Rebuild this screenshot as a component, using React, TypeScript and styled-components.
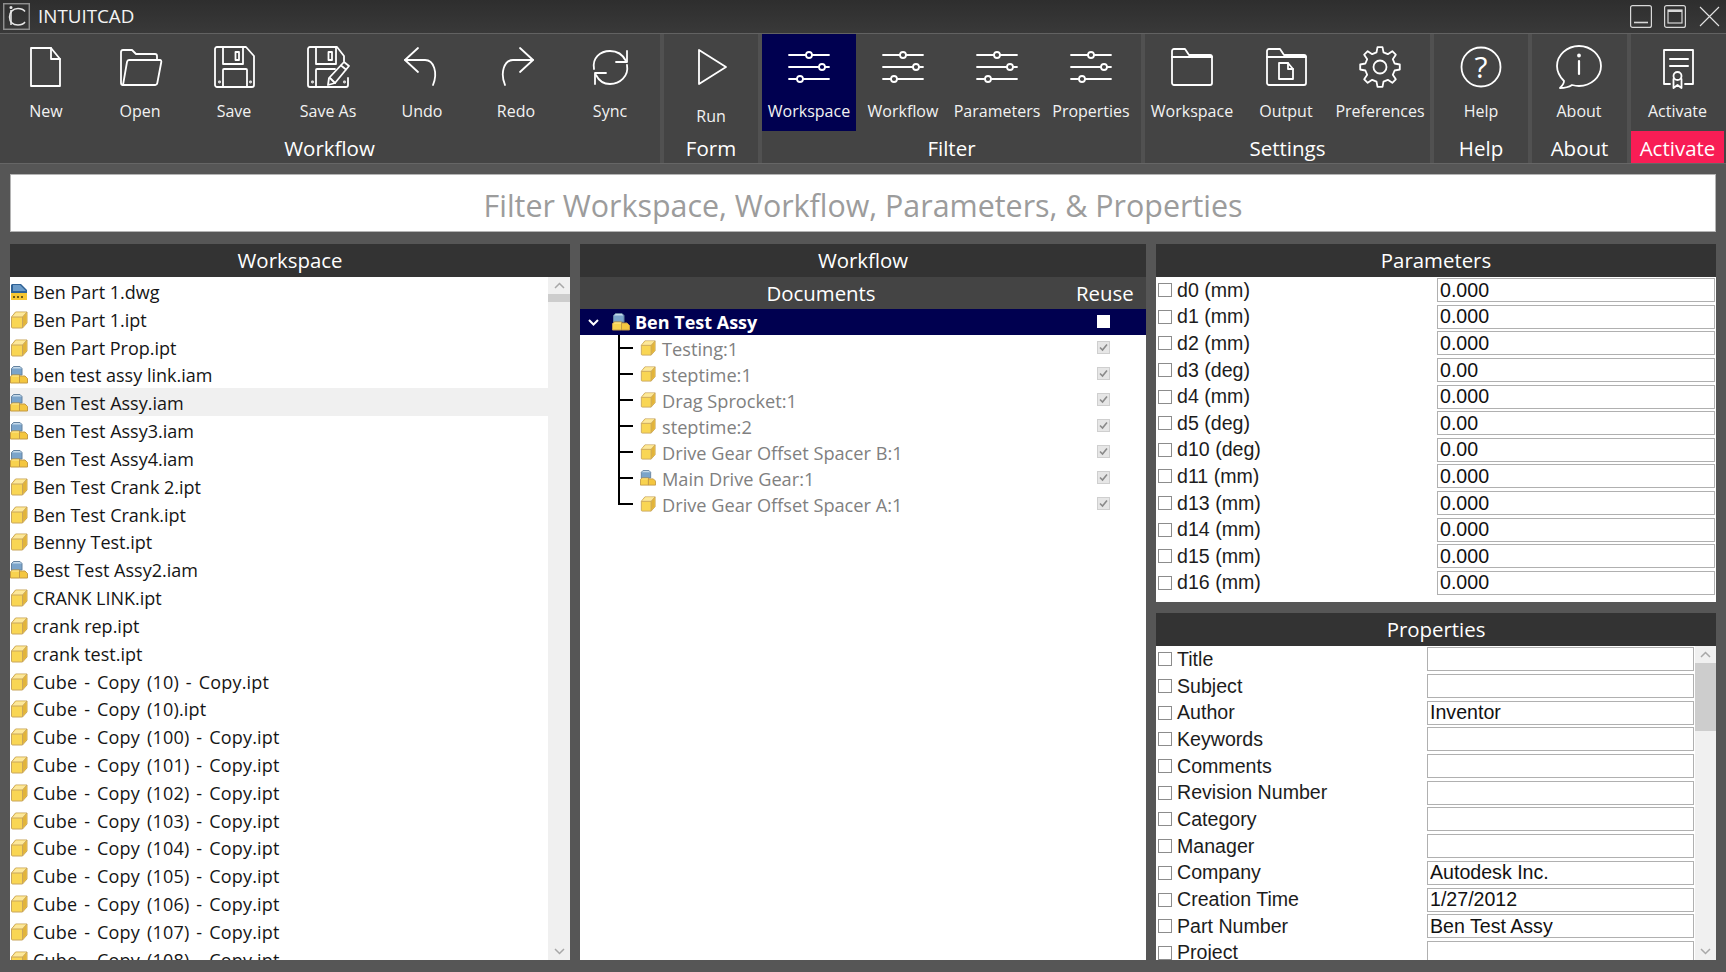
import React from 'react'
import styled, { createGlobalStyle } from 'styled-components'

const UI_FONT = '"Open Sans", "Noto Sans", sans-serif'
const FORM_FONT = '"Liberation Sans", Arial, sans-serif'

const GlobalStyle = createGlobalStyle`
  html, body {
    margin: 0;
    background: #565656;
    overflow: hidden;
  }
  * {
    box-sizing: border-box;
  }
`

const Page = styled.div`
  width: 1726px;
  height: 972px;
  display: flex;
  flex-direction: column;
  background: #565656;
  font-family: ${UI_FONT};
  overflow: hidden;
`

const TitleBar = styled.header`
  height: 34px;
  display: flex;
  align-items: center;
  padding: 0 5px 1px 3px;
  background: linear-gradient(#2e2e2e, #393939);
  border-bottom: 1px solid #626262;
  color: #f4f4f4;
`

const AppName = styled.span`
  margin-left: 8px;
  font-size: 18.8px;
  flex: 1;
`

const WindowButtons = styled.div`
  display: flex;
  gap: 12px;
  align-items: center;
`

const Ribbon = styled.nav`
  height: 130px;
  display: flex;
  margin-left: -1px;
  background: #444444;
  border-bottom: 1px solid #666666;
`

const Group = styled.section<{ $width: number }>`
  display: flex;
  flex-direction: column;
  flex: none;
  width: ${(p) => p.$width}px;
  & + & {
    margin-left: 4px;
  }
  box-shadow: 4px 0 0 #515151;
  &:last-child {
    box-shadow: none;
  }
`

const ButtonRow = styled.div`
  height: 97px;
  display: flex;
`

const GroupLabel = styled.div<{ $alert?: boolean }>`
  height: 32px;
  padding-top: 3px;
  line-height: 28px;
  text-align: center;
  color: #fff;
  font-size: 20.5px;
  background: ${(p) => (p.$alert ? '#f81d55' : 'transparent')};
`

const RibbonButton = styled.button<{ $active?: boolean; $low?: boolean }>`
  width: 94px;
  height: 97px;
  padding: 9px 0 0;
  border: 0;
  display: flex;
  flex-direction: column;
  align-items: center;
  color: #f2f2f2;
  font-family: inherit;
  font-size: 16px;
  background: ${(p) => (p.$active ? '#000050' : 'transparent')};
  span {
    display: block;
    line-height: 22px;
    margin-top: ${(p) => (p.$low ? '14px' : '9px')};
    white-space: nowrap;
  }
`

const FilterBox = styled.input`
  display: block;
  flex: none;
  height: 58px;
  margin: 10px 10px 12px;
  padding: 5px 0 0;
  border: 1px solid #b4b4b4;
  background: #fff;
  text-align: center;
  font-family: inherit;
  font-size: 30.4px;
  outline: none;
  &::placeholder {
    color: #9c9c9c;
    opacity: 1;
  }
`

const Main = styled.main`
  flex: 1;
  min-height: 0;
  display: grid;
  grid-template-columns: 560px 566px 560px;
  gap: 10px;
  padding: 0 10px 12px;
`

const Stack = styled.div`
  display: flex;
  flex-direction: column;
  gap: 11px;
  min-height: 0;
`

const Panel = styled.section<{ $height?: number }>`
  display: flex;
  flex-direction: column;
  min-height: 0;
  background: #fff;
  overflow: hidden;
  ${(p) => (p.$height ? `height: ${p.$height}px; flex: none;` : 'flex: 1;')}
`

const PanelHeader = styled.h2`
  margin: 0;
  flex: none;
  height: 33px;
  line-height: 33px;
  text-align: center;
  font-size: 20.4px;
  font-weight: 400;
  color: #fff;
  background: #333333;
`

const PanelBody = styled.div`
  flex: 1;
  min-height: 0;
  display: flex;
  justify-content: space-between;
  overflow: hidden;
`

const FileList = styled.ul`
  flex: 1;
  margin: 0;
  padding: 0;
  list-style: none;
  overflow: hidden;
`

const FileRow = styled.li<{ $hover?: boolean; $spaced?: boolean }>`
  height: 27.83px;
  display: flex;
  align-items: center;
  gap: 5px;
  padding-top: 2px;
  font-size: 18px;
  color: #151515;
  white-space: nowrap;
  background: ${(p) => (p.$hover ? '#f0f0f0' : 'transparent')};
  word-spacing: ${(p) => (p.$spaced ? '2px' : '0')};
  letter-spacing: ${(p) => (p.$spaced ? '.2px' : '0')};
`

const ScrollTrack = styled.div<{ $width: number }>`
  flex: none;
  width: ${(p) => p.$width}px;
  display: flex;
  flex-direction: column;
  background: #f0f0f0;
`

const ScrollArrow = styled.div`
  flex: none;
  height: 17px;
  display: flex;
  align-items: center;
  justify-content: center;
`

const ScrollThumb = styled.div<{ $size: number }>`
  flex: none;
  height: ${(p) => p.$size}px;
  margin-bottom: auto;
  background: #cdcdcd;
`

const DocHeader = styled.div`
  flex: none;
  height: 32px;
  display: flex;
  align-items: center;
  background: #444444;
  color: #fff;
  font-size: 20.4px;
`

const DocTitle = styled.span`
  flex: 1;
  text-align: center;
`

const ReuseTitle = styled.span`
  width: 84px;
  padding-left: 14px;
`

const Tree = styled.div`
  flex: 1;
  background: #fff;
`

const RootRow = styled.div`
  height: 26px;
  display: flex;
  align-items: center;
  background: #000050;
  color: #fff;
  font-size: 18px;
  font-weight: 700;
  padding-left: 8px;
`

const RootIcon = styled.span`
  display: flex;
  margin-left: 13px;
`

const RootName = styled.span`
  margin-left: 5px;
`

const TreeRow = styled.div`
  height: 26px;
  display: flex;
  align-items: center;
  color: #808080;
  font-size: 18.2px;
  padding-left: 38px;
`

const Branch = styled.span<{ $last?: boolean }>`
  flex: none;
  width: 15px;
  height: 100%;
  margin-right: 7px;
  background:
    linear-gradient(#000, #000) left top / 2px ${(p) => (p.$last ? '50%' : '100%')} no-repeat,
    linear-gradient(#000, #000) left center / 100% 2px no-repeat;
`

const NodeName = styled.span`
  margin-left: 6px;
  padding-top: 2px;
`

const ReuseBox = styled.span<{ $plain?: boolean }>`
  flex: none;
  width: 13px;
  height: 13px;
  margin: 0 36px 2px auto;
  display: flex;
  align-items: center;
  justify-content: center;
  background: ${(p) => (p.$plain ? '#fff' : '#e6e6e6')};
  border: 1px solid ${(p) => (p.$plain ? '#fff' : '#cfcfcf')};
`

const FieldRows = styled.div<{ $label: number; $input: number; $pitch: number }>`
  flex: none;
  display: grid;
  grid-template-columns: ${(p) => p.$label}px ${(p) => p.$input}px;
  grid-auto-rows: ${(p) => p.$pitch}px;
  align-items: center;
  align-content: start;
  overflow: hidden;
`

const FieldLabel = styled.label`
  display: flex;
  align-items: center;
  gap: 5px;
  padding-left: 2px;
  font-family: ${FORM_FONT};
  font-size: 19.6px;
  color: #1c1c1c;
  white-space: nowrap;
`

const Tick = styled.span`
  flex: none;
  width: 14px;
  height: 14px;
  border: 1px solid #8c8c8c;
  background: #fff;
`

const FieldInput = styled.input`
  width: 100%;
  height: 24px;
  padding: 0 2px;
  border: 1px solid #b0b0b0;
  background: #fff;
  font-family: ${FORM_FONT};
  font-size: 19.6px;
  color: #111;
  outline: none;
`

const SmallIcon = styled.svg`
  flex: none;
`

const IconStroke = {
  fill: 'none',
  stroke: '#fff',
  strokeWidth: 1.8,
  strokeLinejoin: 'round' as const,
  strokeLinecap: 'round' as const,
}

const RibbonSvg = ({ children }: { children: React.ReactNode }) => (
  <svg width="48" height="48" viewBox="0 0 48 48" {...IconStroke}>
    {children}
  </svg>
)

function gearPath(cx: number, cy: number, outer: number, inner: number, teeth: number) {
  const step = (Math.PI * 2) / teeth
  const at = (r: number, a: number) => `${(cx + r * Math.cos(a)).toFixed(1)} ${(cy + r * Math.sin(a)).toFixed(1)}`
  const pts: string[] = []
  for (let i = 0; i < teeth; i++) {
    const a = i * step - Math.PI / 2
    pts.push(at(inner, a - step * 0.3), at(outer, a - step * 0.16), at(outer, a + step * 0.16), at(inner, a + step * 0.3))
  }
  return `M${pts.join('L')}Z`
}

const icons: Record<string, React.ReactNode> = {
  new: (
    <RibbonSvg>
      <path d="M9 5h20l9 11v27H9z" />
      <path d="M29 5v11h9" />
    </RibbonSvg>
  ),
  open: (
    <RibbonSvg>
      <path d="M7 42c-1.500 0-2-.5-2-2V9c0-1 .5-2 2-2h9l4 4h19c1.500 0 2 1 2 2v4" />
      <path d="M7 42l4-23c.2-1 1-2 2-2h31c1 0 1.500 1 1.300 2l-4 21c-.2 1-1 2-2 2z" />
    </RibbonSvg>
  ),
  save: (
    <RibbonSvg>
      <path d="M7 4h29l8 9v29c0 1-1 2-2 2H7c-1 0-2-1-2-2V6c0-1 1-2 2-2z" />
      <path d="M13 4v17h20V4" />
      <rect x="25.500" y="9" width="3.500" height="8" />
      <path d="M13 44V27c0-.6.4-1 1-1h22c.6 0 1 .4 1 1v17" />
      <circle cx="9.500" cy="39" r=".5" />
      <circle cx="40.500" cy="39" r=".5" />
    </RibbonSvg>
  ),
  saveAs: (
    <RibbonSvg>
      <path d="M40 18V13l-7-9H6C5 4 4 5 4 6v36c0 1 1 2 2 2h36c1 0 2-1 2-2v-7" />
      <path d="M12 4v17h20V4" />
      <rect x="24.500" y="9" width="3.500" height="8" />
      <path d="M12 44V27c0-.6.4-1 1-1h18" />
      <circle cx="8.500" cy="39" r=".5" />
      <circle cx="40.500" cy="39" r=".5" />
      <path d="M40 19l5 4-14 17-7 2 1-7z" fill="#444444" />
      <path d="M37 22.500l5 4M26 35l5 5" />
    </RibbonSvg>
  ),
  undo: (
    <RibbonSvg>
      <path d="M20 5L7 17l13 12" />
      <path d="M7 17h20c9 0 13 13 8 25" />
    </RibbonSvg>
  ),
  redo: (
    <RibbonSvg>
      <path d="M28 5l13 12-13 12" />
      <path d="M41 17H21c-9 0-13 13-8 25" />
    </RibbonSvg>
  ),
  sync: (
    <RibbonSvg>
      <path d="M8 26C6 15 14 8 24 8c7 0 13 4 16 10" />
      <path d="M41 8v11H30" />
      <path d="M41 22c2 11-7 19-17 19-6 0-11-3-14-9" />
      <path d="M9 41V30h11" />
    </RibbonSvg>
  ),
  run: (
    <RibbonSvg>
      <path d="M12 7l27 17-27 17z" />
    </RibbonSvg>
  ),
  sliders: (
    <RibbonSvg>
      <path d="M4 12h17M27 12h17M4 24h30M40 24h4M4 36h8M18 36h26" />
      <circle cx="24" cy="12" r="3" />
      <circle cx="37" cy="24" r="3" />
      <circle cx="15" cy="36" r="3" />
    </RibbonSvg>
  ),
  folder: (
    <RibbonSvg>
      <path d="M4 40V8c0-1 1-2 2-2h11l4 6h21c1 0 2 1 2 2v26c0 1-1 2-2 2H6c-1 0-2-1-2-2z" />
      <path d="M4 14h40" />
    </RibbonSvg>
  ),
  output: (
    <RibbonSvg>
      <path d="M5 40V8c0-1 1-2 2-2h11l4 6h20c1 0 2 1 2 2v26c0 1-1 2-2 2H7c-1 0-2-1-2-2z" />
      <path d="M5 14h39" />
      <path d="M17 20h9l5 6v10H17z" />
      <path d="M26 20v6h5" />
    </RibbonSvg>
  ),
  gear: (
    <RibbonSvg>
      <path d={gearPath(24, 24, 20, 15, 8)} />
      <circle cx="24" cy="24" r="6.500" />
    </RibbonSvg>
  ),
  help: (
    <RibbonSvg>
      <circle cx="24" cy="24" r="19.500" />
      <text x="24" y="35" textAnchor="middle" fill="#fff" stroke="none" fontFamily={UI_FONT} fontSize="30">
        ?
      </text>
    </RibbonSvg>
  ),
  about: (
    <RibbonSvg>
      <path d="M24 3c12 0 22 9 22 20s-10 20-22 20c-3 0-5-.5-7-1-3 2-7 3-12 3 2-2 4-4 4-7C5 34 2 29 2 23 2 12 12 3 24 3z" />
      <path d="M24 18v13" strokeWidth="2.200" />
      <circle cx="24" cy="12.500" r="1" />
    </RibbonSvg>
  ),
  activate: (
    <RibbonSvg>
      <path d="M16 41h-6V7h29v34h-8" />
      <path d="M16 16h18M16 23h18" strokeWidth="2" />
      <circle cx="23.500" cy="33" r="4" />
      <path d="M19.500 36v9l4-3 4 3v-9" />
    </RibbonSvg>
  ),
}

const PartIcon = ({ size = 18 }: { size?: number }) => (
  <SmallIcon width={size} height={size} viewBox="0 0 18 18">
    <path d="M1.500 6l4-5H17v11l-4.500 5H2.500c-.6 0-1-.4-1-1z" fill="#f9d654" stroke="#c9a65c" />
    <path d="M2 6l4-4.500H16.500L12.500 6z" fill="#fde89a" />
    <path d="M12.500 6.300L16.500 2v9.800l-4 4.500z" fill="#e2b43a" />
    <path d="M1.500 6h11V17M12.500 6L17 1" fill="none" stroke="#c9a65c" />
  </SmallIcon>
)

const AssemblyIcon = ({ size = 18 }: { size?: number }) => (
  <SmallIcon width={size} height={size} viewBox="0 0 18 18">
    <path d="M1.500 2.500L3.500.5h6.500l2 2v6.500h-10.500z" fill="#7ba4ca" stroke="#64829f" />
    <path d="M2 2.500L3.800 1h6l1.700 1.500z" fill="#c6daea" />
    <path d="M.5 10.500L2.500 9h7v8H.5z" fill="#f8d24f" stroke="#c49a45" />
    <path d="M1.200 10.500L2.800 9.500h6.200v1z" fill="#fde89a" />
    <path d="M9.500 10h5.500l2.500 2.500V17H9.500z" fill="#f4c63f" stroke="#c49a45" />
  </SmallIcon>
)

const DwgIcon = () => (
  <SmallIcon width="18" height="18" viewBox="0 0 18 18">
    <path d="M2 1h9l6 6v10H1V2z" fill="#2f6296" />
    <path d="M3 2h7l6 6H3z" fill="#6d9cc8" />
    <path d="M1 10h16v7H1z" fill="#f6c733" />
    <path d="M3 13h2v2H3zM7 13h2v2H7zM11 13h2v2h-2z" fill="#6d5a18" />
  </SmallIcon>
)

const Chevron = ({ up, color = '#a8a8a8', heavy }: { up?: boolean; color?: string; heavy?: boolean }) => (
  <svg width="11" height="7" viewBox="0 0 11 7" fill="none" stroke={color} strokeWidth={heavy ? 2 : 1.5}>
    <path d={up ? 'M1 6l4.500-4.500L10 6' : 'M1 1l4.500 4.500L10 1'} />
  </svg>
)

const Scrollbar = ({ width, thumb }: { width: number; thumb: number }) => (
  <ScrollTrack $width={width}>
    <ScrollArrow>
      <Chevron up />
    </ScrollArrow>
    <ScrollThumb $size={thumb} />
    <ScrollArrow>
      <Chevron />
    </ScrollArrow>
  </ScrollTrack>
)

const groups = [
  {
    label: 'Workflow',
    width: 661,
    buttons: [
      ['New', 'new'],
      ['Open', 'open'],
      ['Save', 'save'],
      ['Save As', 'saveAs'],
      ['Undo', 'undo'],
      ['Redo', 'redo'],
      ['Sync', 'sync'],
    ],
  },
  { label: 'Form', width: 94, buttons: [['Run', 'run']] },
  {
    label: 'Filter',
    width: 379,
    buttons: [
      ['Workspace', 'sliders'],
      ['Workflow', 'sliders'],
      ['Parameters', 'sliders'],
      ['Properties', 'sliders'],
    ],
  },
  {
    label: 'Settings',
    width: 285,
    buttons: [
      ['Workspace', 'folder'],
      ['Output', 'output'],
      ['Preferences', 'gear'],
    ],
  },
  { label: 'Help', width: 94, buttons: [['Help', 'help']] },
  { label: 'About', width: 95, buttons: [['About', 'about']] },
  { label: 'Activate', width: 93, buttons: [['Activate', 'activate']] },
]

const files = [
  'Ben Part 1.dwg',
  'Ben Part 1.ipt',
  'Ben Part Prop.ipt',
  'ben test assy link.iam',
  'Ben Test Assy.iam',
  'Ben Test Assy3.iam',
  'Ben Test Assy4.iam',
  'Ben Test Crank 2.ipt',
  'Ben Test Crank.ipt',
  'Benny Test.ipt',
  'Best Test Assy2.iam',
  'CRANK LINK.ipt',
  'crank rep.ipt',
  'crank test.ipt',
  'Cube - Copy (10) - Copy.ipt',
  'Cube - Copy (10).ipt',
  'Cube - Copy (100) - Copy.ipt',
  'Cube - Copy (101) - Copy.ipt',
  'Cube - Copy (102) - Copy.ipt',
  'Cube - Copy (103) - Copy.ipt',
  'Cube - Copy (104) - Copy.ipt',
  'Cube - Copy (105) - Copy.ipt',
  'Cube - Copy (106) - Copy.ipt',
  'Cube - Copy (107) - Copy.ipt',
  'Cube - Copy (108) - Copy.ipt',
]

const documents = [
  'Testing:1',
  'steptime:1',
  'Drag Sprocket:1',
  'steptime:2',
  'Drive Gear Offset Spacer B:1',
  'Main Drive Gear:1',
  'Drive Gear Offset Spacer A:1',
]

const parameters = [
  ['d0 (mm)', '0.000'],
  ['d1 (mm)', '0.000'],
  ['d2 (mm)', '0.000'],
  ['d3 (deg)', '0.00'],
  ['d4 (mm)', '0.000'],
  ['d5 (deg)', '0.00'],
  ['d10 (deg)', '0.00'],
  ['d11 (mm)', '0.000'],
  ['d13 (mm)', '0.000'],
  ['d14 (mm)', '0.000'],
  ['d15 (mm)', '0.000'],
  ['d16 (mm)', '0.000'],
]

const properties = [
  ['Title', ''],
  ['Subject', ''],
  ['Author', 'Inventor'],
  ['Keywords', ''],
  ['Comments', ''],
  ['Revision Number', ''],
  ['Category', ''],
  ['Manager', ''],
  ['Company', 'Autodesk Inc.'],
  ['Creation Time', '1/27/2012'],
  ['Part Number', 'Ben Test Assy'],
  ['Project', ''],
]

const fileIcon = (name: string) => {
  if (name.endsWith('.dwg')) return <DwgIcon />
  if (name.endsWith('.iam')) return <AssemblyIcon />
  return <PartIcon />
}

const Fields = ({ rows }: { rows: string[][] }) => (
  <>
    {rows.map(([label, value]) => (
      <React.Fragment key={label}>
        <FieldLabel>
          <Tick />
          {label}
        </FieldLabel>
        <FieldInput readOnly value={value} />
      </React.Fragment>
    ))}
  </>
)

function App() {
  return (
    <Page>
      <GlobalStyle />
      <TitleBar>
        <svg width="27" height="27" viewBox="0 0 27 27" fill="none" stroke="#e8e8e8" strokeWidth="1.500">
          <rect x=".7" y=".7" width="25.600" height="25.600" stroke="#8e8e8e" />
          <path d="M8 7v15" />
          <circle cx="8" cy="4.500" r=".8" />
          <path d="M22 8.500C20 6 17.500 5.500 15 5.500c-5 0-8.500 3.500-8.500 8.500s3.500 8 8.500 8c3 0 5.500-1 7-3" />
        </svg>
        <AppName>INTUITCAD</AppName>
        <WindowButtons>
          <svg width="22" height="23" viewBox="0 0 22 23" fill="none" stroke="#d8d8d8" strokeWidth="1.200">
            <rect x=".6" y=".6" width="20.800" height="21.800" rx="2" />
            <path d="M4 17.500h14" strokeWidth="1.600" />
          </svg>
          <svg width="22" height="23" viewBox="0 0 22 23" fill="none" stroke="#d8d8d8" strokeWidth="1.200">
            <rect x=".6" y=".6" width="20.800" height="21.800" rx="2" />
            <rect x="4" y="5" width="14" height="13" />
            <path d="M4 6h14" strokeWidth="2" />
          </svg>
          <svg width="23" height="23" viewBox="0 0 23 23" fill="none" stroke="#e4e4e4" strokeWidth="1.100">
            <path d="M2 2l19 19M21 2L2 21" />
          </svg>
        </WindowButtons>
      </TitleBar>

      <Ribbon>
        {groups.map((group) => (
          <Group key={group.label} $width={group.width}>
            <ButtonRow>
              {group.buttons.map(([label, icon], i) => (
                <RibbonButton key={label} $active={group.label === 'Filter' && i === 0} $low={label === 'Run'}>
                  {icons[icon]}
                  <span>{label}</span>
                </RibbonButton>
              ))}
            </ButtonRow>
            <GroupLabel $alert={group.label === 'Activate'}>{group.label}</GroupLabel>
          </Group>
        ))}
      </Ribbon>

      <FilterBox placeholder="Filter Workspace, Workflow, Parameters, & Properties" />

      <Main>
        <Panel>
          <PanelHeader>Workspace</PanelHeader>
          <PanelBody>
            <FileList>
              {files.map((name) => (
                <FileRow key={name} $hover={name === 'Ben Test Assy.iam'} $spaced={name.startsWith('Cube')}>
                  {fileIcon(name)}
                  {name}
                </FileRow>
              ))}
            </FileList>
            <Scrollbar width={22} thumb={8} />
          </PanelBody>
        </Panel>

        <Panel>
          <PanelHeader>Workflow</PanelHeader>
          <DocHeader>
            <DocTitle>Documents</DocTitle>
            <ReuseTitle>Reuse</ReuseTitle>
          </DocHeader>
          <Tree>
            <RootRow>
              <Chevron color="#fff" heavy />
              <RootIcon>
                <AssemblyIcon />
              </RootIcon>
              <RootName>Ben Test Assy</RootName>
              <ReuseBox $plain />
            </RootRow>
            {documents.map((name, i) => (
              <TreeRow key={name}>
                <Branch $last={i === documents.length - 1} />
                {name.startsWith('Main') ? <AssemblyIcon size={16} /> : <PartIcon size={16} />}
                <NodeName>{name}</NodeName>
                <ReuseBox>
                  <svg width="11" height="11" viewBox="0 0 11 11" fill="none" stroke="#8a8a8a" strokeWidth="1.600">
                    <path d="M2 5.500l2.500 2.500L9 2.500" />
                  </svg>
                </ReuseBox>
              </TreeRow>
            ))}
          </Tree>
        </Panel>

        <Stack>
          <Panel $height={358}>
            <PanelHeader>Parameters</PanelHeader>
            <FieldRows $label={281} $input={278} $pitch={26.6}>
              <Fields rows={parameters} />
            </FieldRows>
          </Panel>
          <Panel>
            <PanelHeader>Properties</PanelHeader>
            <PanelBody>
              <FieldRows $label={271} $input={267} $pitch={26.7}>
                <Fields rows={properties} />
              </FieldRows>
              <Scrollbar width={21} thumb={68} />
            </PanelBody>
          </Panel>
        </Stack>
      </Main>
    </Page>
  )
}

export default App
